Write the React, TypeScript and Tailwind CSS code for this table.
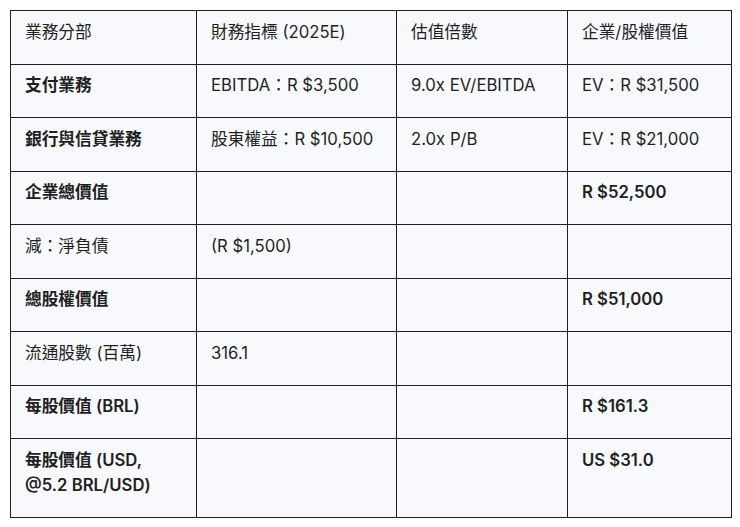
import * as React from "react";

type Cell = { text: React.ReactNode; bold?: boolean };

const header = ["業務分部", "財務指標 (2025E)", "估值倍數", "企業/股權價值"];

const rows: Cell[][] = [
  [
    { text: "支付業務", bold: true },
    { text: "EBITDA：R $3,500" },
    { text: "9.0x EV/EBITDA" },
    { text: "EV：R $31,500" },
  ],
  [
    { text: "銀行與信貸業務", bold: true },
    { text: "股東權益：R $10,500" },
    { text: "2.0x P/B" },
    { text: "EV：R $21,000" },
  ],
  [{ text: "企業總價值", bold: true }, { text: "" }, { text: "" }, { text: "R $52,500", bold: true }],
  [{ text: "減：淨負債" }, { text: "(R $1,500)" }, { text: "" }, { text: "" }],
  [{ text: "總股權價值", bold: true }, { text: "" }, { text: "" }, { text: "R $51,000", bold: true }],
  [{ text: "流通股數 (百萬)" }, { text: "316.1" }, { text: "" }, { text: "" }],
  [{ text: "每股價值 (BRL)", bold: true }, { text: "" }, { text: "" }, { text: "R $161.3", bold: true }],
  [
    {
      text: (
        <>
          每股價值 (USD,
          <br />
          @5.2 BRL/USD)
        </>
      ),
      bold: true,
    },
    { text: "" },
    { text: "" },
    { text: "US $31.0", bold: true },
  ],
];

const widths = ["w-[186px]", "w-[200px]", "w-[171px]", "w-[164px]"];

const cellClass =
  "border border-[#1f1f1f] px-[14px] pt-[8.5px] pb-[19px] align-top text-left text-[16.7px] leading-[25px] text-[#1f1f1f]";

export default function App() {
  return (
    <div className="min-h-screen bg-white p-[10px] font-['Inter','Noto_Sans_CJK_TC',sans-serif]">
      <table className="w-[721px] table-fixed border-collapse bg-[#f8f9fc]">
        <colgroup>
          {widths.map((w, i) => (
            <col key={i} className={w} />
          ))}
        </colgroup>
        <thead>
          <tr>
            {header.map((h) => (
              <th key={h} className={`${cellClass} font-normal`}>
                {h}
              </th>
            ))}
          </tr>
        </thead>
        <tbody>
          {rows.map((row, r) => (
            <tr key={r}>
              {row.map((c, i) => (
                <td
                  key={i}
                  className={`${cellClass} ${c.bold ? "font-semibold" : "font-normal"}`}
                >
                  {c.text}
                </td>
              ))}
            </tr>
          ))}
        </tbody>
      </table>
    </div>
  );
}
